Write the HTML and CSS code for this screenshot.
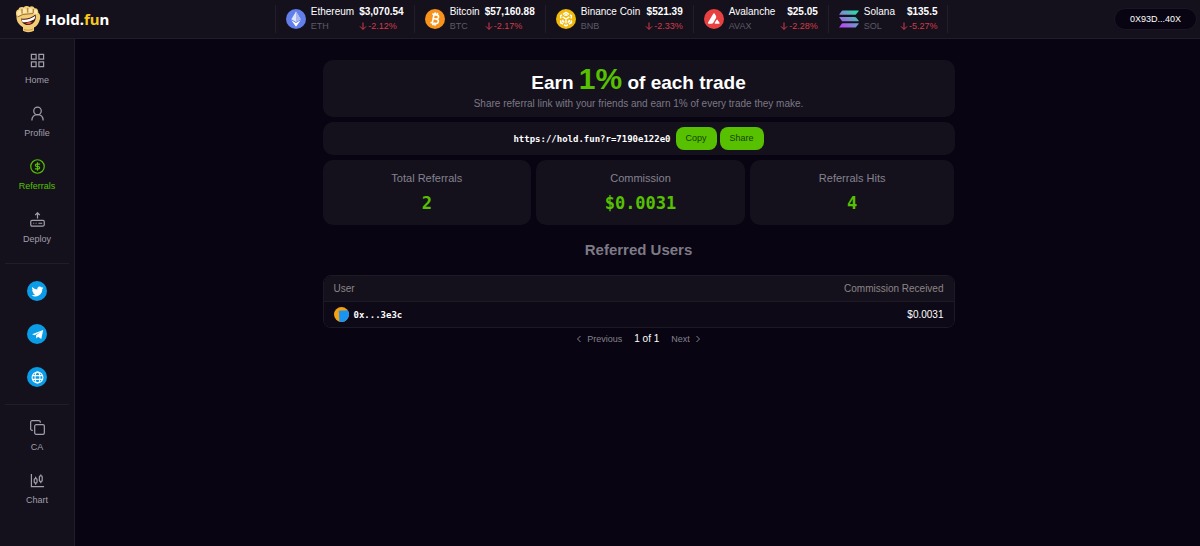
FILE: index.html
```html
<!DOCTYPE html>
<html lang="en">
<head>
<meta charset="utf-8">
<title>Hold.fun – Referrals</title>
<link rel="stylesheet" href="styles.css">
</head>
<body>
<header class="topbar">
  <a class="logo" href="#">
    <svg class="logo-mark" viewBox="0 0 26 28" aria-hidden="true">
      <path d="M1.500 11C.5 8 1 5 3.500 4.500 4 2 7 1.500 8.500 2.500 10 .5 13 .5 14.500 2c2-1.500 4.500-.8 5 1.200 2.500-.4 4 1.800 3.800 4.600C26 9.500 25.500 14 24 17c-1.200 2.800-3 4.600-5 5.500v3.300c-3 1.800-8.500 1.800-11 0v-3.600C4 20 1 16 1.500 11z" fill="#f2cd78"/>
      <path d="M3.500 5.500c2-1 3 1 3 3.500L3 11C2 9 2 6.500 3.500 5.500zM8.500 3.500c2-.6 3.300 1 3.300 4l-3.500 1C7.300 6.500 7 4.200 8.500 3.500zM14.500 3.200c2.200-.4 3 1 3 4.300h-4c-.6-1.800-.6-4 1-4.300zM20 4.500c2 0 2.500 1.800 2.300 4.500L19 8.500c-.4-1.600-.3-4 1-4z" fill="#ffe9b0"/>
      <path d="M7 4v4.500M12.800 3v4.500M18.300 4v4M2.500 12L8 9.500l10-1" fill="none" stroke="#8a5a22" stroke-width=".8"/>
      <path d="M6 13.500c4.500 1 10.500-.5 14.500-4 1.200 5-1.200 9.500-6.500 10.500-4.500.6-7.500-2.500-8-6.500z" fill="#43160f"/>
      <path d="M6.500 14.500c4.500.8 9.500-.5 13.500-3.500.2 1.600-.1 2.600-1 3.600-3.500 2-7.500 3-11.500 2.400z" fill="#fff"/>
      <path d="M10.500 18.600c1.500-1.400 4-2 6.500-1.400-1.500 2-4 2.700-6.500 1.400z" fill="#d9564b"/>
      <path d="M9 24.500c3 1 6 1 9-.5" fill="none" stroke="#c08a3a" stroke-width=".8"/>
    </svg>
    <span class="logo-text">Hold.<span class="logo-accent">fu</span>n</span>
  </a>
  <ul class="ticker">
    <li class="coin">
      <svg class="coin-icon" viewBox="0 0 32 32" aria-hidden="true"><circle cx="16" cy="16" r="16" fill="#627eea"/><path d="M16 4l-7.5 12.4L16 20.8l7.5-4.4z" fill="#dfe5fb"/><path d="M16 4v9l7.5 3.4zM16 20.8v-7.8l7.5 3.4z" fill="#a9b8f3"/><path d="M8.5 17.900L16 28.400l7.500-10.500L16 22.300z" fill="#fff"/></svg>
      <div class="coin-name"><span>Ethereum</span><span class="symbol">ETH</span></div>
      <div class="coin-price"><strong>$3,070.54</strong><span class="change"><svg viewBox="0 0 8 8"><path d="M4 .5v6.800M1 4.400l3 3 3-3"/></svg>-2.12%</span></div>
    </li>
    <li class="coin">
      <svg class="coin-icon" viewBox="0 0 32 32" aria-hidden="true"><circle cx="16" cy="16" r="16" fill="#f7931a"/><g transform="rotate(12 16 16)" fill="none" stroke="#fff" stroke-width="2.600"><path d="M10 9h7.500a3.300 3.300 0 010 6.800H13h5.500a3.500 3.500 0 010 7.200H10M13 9v14M14.500 5.500V9M18 5.500V9M14.500 23v3.500M18 23v3.500"/></g></svg>
      <div class="coin-name"><span>Bitcoin</span><span class="symbol">BTC</span></div>
      <div class="coin-price"><strong>$57,160.88</strong><span class="change"><svg viewBox="0 0 8 8"><path d="M4 .5v6.800M1 4.400l3 3 3-3"/></svg>-2.17%</span></div>
    </li>
    <li class="coin">
      <svg class="coin-icon" viewBox="0 0 32 32" aria-hidden="true"><circle cx="16" cy="16" r="16" fill="#f0b90b"/><path d="M11 8.500l5-3 5 3M7.500 15v-4.500l2-1.200M24.500 15v-4.500l-2-1.200M7.500 18v4l4 2.300M24.500 18v4l-4 2.300M13 25.200l3 1.800 3-1.800M10.500 12.500l5.500 3.200 5.500-3.200M16 15.700V23M11 17v3l2.500 1.500M21 17v3l-2.500 1.500M13.500 10.500l2.500-1.500 2.500 1.500" fill="none" stroke="#fff" stroke-width="2.400"/></svg>
      <div class="coin-name"><span>Binance Coin</span><span class="symbol">BNB</span></div>
      <div class="coin-price"><strong>$521.39</strong><span class="change"><svg viewBox="0 0 8 8"><path d="M4 .5v6.800M1 4.400l3 3 3-3"/></svg>-2.33%</span></div>
    </li>
    <li class="coin">
      <svg class="coin-icon" viewBox="0 0 32 32" aria-hidden="true"><circle cx="16" cy="16" r="16" fill="#e84142"/><path d="M14.800 7.600q1.200-2 2.400 0l2 3.600q.8 1.500 0 3l-4.600 8q-.8 1.300-2.400 1.300H7.500q-2 0-1-1.800zM19.800 17.800q1.100-1.800 2.200 0l2.800 4.200q.8 1.500-.9 1.500h-5.800q-1.700 0-.9-1.500z" fill="#fff"/></svg>
      <div class="coin-name"><span>Avalanche</span><span class="symbol">AVAX</span></div>
      <div class="coin-price"><strong>$25.05</strong><span class="change"><svg viewBox="0 0 8 8"><path d="M4 .5v6.800M1 4.400l3 3 3-3"/></svg>-2.28%</span></div>
    </li>
    <li class="coin">
      <svg class="coin-icon" viewBox="0 0 32 32" aria-hidden="true"><defs><linearGradient id="sol" gradientUnits="userSpaceOnUse" x1="4" y1="30" x2="28" y2="3"><stop offset="0" stop-color="#b743f5"/><stop offset=".5" stop-color="#7b8fd0"/><stop offset="1" stop-color="#25dfa5"/></linearGradient></defs><path d="M6 2.500h25q1 0 .3 1l-4 5q-.8.800-1.800.800H1q-1.300 0-.4-1l3.800-5Q5 2.500 6 2.500zM1 12.700h24.500q1 0 1.800.800l4 5q.7 1-.3 1H6q-1 0-1.600-.8l-3.800-5Q-.2 12.700 1 12.700zM6 22.900h25q1 0 .3 1l-4 5q-.8.800-1.800.800H1q-1.300 0-.4-1l3.800-5q.6-.8 1.600-.8z" fill="url(#sol)"/></svg>
      <div class="coin-name"><span>Solana</span><span class="symbol">SOL</span></div>
      <div class="coin-price"><strong>$135.5</strong><span class="change"><svg viewBox="0 0 8 8"><path d="M4 .5v6.800M1 4.400l3 3 3-3"/></svg>-5.27%</span></div>
    </li>
  </ul>
  <button class="wallet" type="button">0X93D...40X</button>
</header>
<div class="layout">
  <nav class="sidebar">
    <div class="nav-group">
      <a class="nav-item" href="#"><svg viewBox="0 0 16 16"><path d="M1.500 1.500h5v5h-5zM9.500 1.500h5v5h-5zM1.500 9.500h5v5h-5zM9.500 9.500h5v5h-5z"/></svg>Home</a>
      <a class="nav-item" href="#"><svg viewBox="0 0 16 16"><circle cx="8" cy="5.200" r="4"/><path d="M2 15.500c0-4 2.300-6.300 6-6.300s6 2.300 6 6.300"/></svg>Profile</a>
      <a class="nav-item active" href="#"><svg viewBox="0 0 16 16"><circle cx="8" cy="8" r="7.200"/><path d="M10.800 5.500H7a1.250 1.250 0 000 2.500h2a1.250 1.250 0 010 2.500H5.200M8 3.500v9"/></svg>Referrals</a>
      <a class="nav-item" href="#"><svg viewBox="0 0 16 16"><rect x=".8" y="9" width="14.400" height="6" rx="1.300"/><path d="M8 7V1M5.500 3.300L8 .8l2.500 2.500M3.500 12h1M6 12h1M9 12h4"/></svg>Deploy</a>
    </div>
    <div class="social-group">
      <a class="social" href="#" aria-label="Twitter"><svg viewBox="0 0 24 24"><path d="M23 5c-.8.400-1.700.6-2.600.7.900-.5 1.600-1.400 2-2.400-.9.500-1.900.9-2.900 1.100A4.500 4.500 0 0011.700 8.500C8 8.300 4.700 6.500 2.500 3.800c-1.200 2-.6 4.700 1.400 6-.7 0-1.400-.2-2-.6 0 2.200 1.500 4.100 3.600 4.600-.6.200-1.300.2-2 .1.600 1.800 2.200 3.100 4.200 3.100A9.100 9.100 0 011 18.900 12.900 12.900 0 0020.800 7.400C21.700 6.700 22.400 5.900 23 5z"/></svg></a>
      <a class="social" href="#" aria-label="Telegram"><svg viewBox="0 0 24 24"><path d="M2 11.500L22.500 3.500 19 20.500l-6-4.300-3 3-.8-5.700L18 7 6.500 13.500z"/></svg></a>
      <a class="social" href="#" aria-label="Website"><svg class="globe" viewBox="0 0 24 24"><circle cx="12" cy="12" r="10"/><ellipse cx="12" cy="12" rx="4.500" ry="10"/><path d="M3 8.500h18M3 15.500h18"/></svg></a>
    </div>
    <div class="nav-group">
      <a class="nav-item" href="#"><svg viewBox="0 0 16 16"><rect x="5" y="5" width="10.300" height="10.300" rx="1.500"/><path d="M3 11H2.200A1.500 1.500 0 01.7 9.500V2.200A1.500 1.500 0 012.200.7h7.300A1.500 1.500 0 0111 2.200V3"/></svg>CA</a>
      <a class="nav-item" href="#"><svg viewBox="0 0 16 16"><path d="M1.500 1v13.500H15M6 4v2M6 10.500v2M11.500 1.500V3M11.500 9v2"/><rect x="4.500" y="6" width="3" height="4.500" rx="1"/><rect x="10" y="3" width="3" height="6" rx="1"/></svg>Chart</a>
    </div>
  </nav>
  <main class="main">
    <div class="content">
      <section class="panel hero">
        <h1>Earn <span class="hero-rate">1%</span> of each trade</h1>
        <p>Share referral link with your friends and earn 1% of every trade they make.</p>
      </section>
      <section class="panel link-row">
        <code>https://hold.fun?r=7190e122e0</code>
        <div class="link-actions">
          <button class="btn" type="button">Copy</button>
          <button class="btn" type="button">Share</button>
        </div>
      </section>
      <dl class="stats">
        <div class="panel stat"><dt>Total Referrals</dt><dd>2</dd></div>
        <div class="panel stat"><dt>Commission</dt><dd>$0.0031</dd></div>
        <div class="panel stat"><dt>Referrals Hits</dt><dd>4</dd></div>
      </dl>
      <h2>Referred Users</h2>
      <div class="table-wrap">
        <table>
          <thead><tr><th scope="col">User</th><th scope="col">Commission Received</th></tr></thead>
          <tbody><tr>
            <td><div class="user"><svg class="avatar" viewBox="0 0 14 14" aria-hidden="true"><defs><clipPath id="av"><circle cx="7" cy="7" r="7"/></clipPath></defs><g clip-path="url(#av)"><path d="M0 0h14v14H0z" fill="#f5a011"/><path d="M4.500 3.500L14 3v11H5z" fill="#1a94f2"/></g></svg><code>0x...3e3c</code></div></td>
            <td>$0.0031</td>
          </tr></tbody>
        </table>
      </div>
      <div class="pager">
        <button type="button"><svg viewBox="0 0 8 8"><path d="M5.500 1l-3 3 3 3"/></svg>Previous</button>
        <span>1 of 1</span>
        <button type="button">Next<svg viewBox="0 0 8 8"><path d="M2.500 1l3 3-3 3"/></svg></button>
      </div>
    </div>
  </main>
</div>
</body>
</html>
```
FILE: styles.css
```css
* { box-sizing: border-box; }

body {
  margin: 0;
  min-height: 100vh;
  display: flex;
  flex-direction: column;
  background: #080411;
  color: #fff;
  font: 10px/14px "Liberation Sans", Arial, sans-serif;
}

a { color: inherit; text-decoration: none; }
button { font: inherit; color: inherit; border: 0; background: none; padding: 0; cursor: pointer; }
h1, h2, p, ul, dl, dd { margin: 0; padding: 0; }
code { font: bold 9px/14px "DejaVu Sans Mono", monospace; }

.topbar {
  display: flex;
  align-items: center;
  justify-content: space-between;
  height: 39px;
  padding: 0 3px 0 15px;
  background: #14111d;
  border-bottom: 1px solid #211e2a;
}

.logo { display: flex; align-items: center; gap: 4px; }
.logo-mark { width: 26px; height: 28px; }
.logo-text { font: bold 15px/20px "Noto Sans", sans-serif; }
.logo-accent { color: #f9c81b; }

.ticker { display: flex; list-style: none; border-left: 1px solid #211e2a; }
.coin {
  display: flex;
  align-items: center;
  gap: 5px;
  padding: 0 10px;
  border-right: 1px solid #211e2a;
}
.coin-icon { width: 20px; height: 20px; }
.coin-name, .coin-price { display: flex; flex-direction: column; }
.coin-price strong { text-align: right; }
.symbol { font-size: 9px; color: #5d5a66; }
.change { display: flex; align-items: center; gap: 1px; font-size: 9px; color: #d23c47; }
.change svg { width: 8px; height: 8px; fill: none; stroke: currentColor; stroke-width: 1; }

.wallet {
  padding: 0 15px;
  border: 1px solid #1a1624;
  border-radius: 11px;
  background: #080411;
  font-size: 9px;
  line-height: 20px;
}

.layout { display: flex; flex: 1; }

.sidebar {
  flex: none;
  width: 75px;
  padding: 9px 5px;
  background: #14111d;
  border-right: 1px solid #211e2a;
}
.nav-group { display: flex; flex-direction: column; }
.nav-item {
  display: flex;
  flex-direction: column;
  align-items: center;
  gap: 5px;
  height: 53px;
  padding-top: 5px;
  color: #a19fa9;
  font-size: 9px;
}
.nav-item svg { width: 15px; height: 15px; fill: none; stroke: currentColor; stroke-width: 1.3; }
.nav-item.active { color: #57c000; }

.social-group {
  display: flex;
  flex-direction: column;
  align-items: center;
  gap: 23px;
  margin: 3px 0 10px;
  padding: 17px 0;
  border: solid #211e2a;
  border-width: 1px 0;
}
.social {
  display: flex;
  align-items: center;
  justify-content: center;
  width: 20px;
  height: 20px;
  border-radius: 50%;
  background: #0b9ce8;
}
.social svg { width: 13px; height: 13px; fill: #fff; }
.social .globe { fill: none; stroke: #fff; stroke-width: 2; }

.main { flex: 1; padding: 21px 20px 20px 22px; }
.content { max-width: 632px; margin: 0 auto; }
.panel { background: #14111d; border-radius: 10px; }

.hero { padding: 2px 10px 6px; text-align: center; }
.hero h1 { font-size: 19px; line-height: 22px; }
.hero-rate { font-size: 30px; line-height: 34px; color: #57c000; }
.hero p { padding-top: 1px; color: #7b7884; }

.link-row {
  display: flex;
  justify-content: center;
  align-items: center;
  gap: 5px;
  margin: 5px 0;
  padding: 5px;
}
.link-actions { display: flex; gap: 3px; }
.btn {
  padding: 0 10px;
  border-radius: 8px;
  background: #57c000;
  color: #164000;
  font-size: 9px;
  line-height: 23px;
}

.stats { display: grid; grid-template-columns: 208fr 208fr 204fr; gap: 5px; text-align: center; }
.stat { padding: 11px 10px 12px; }
.stat dt { font-size: 11px; color: #85828e; }
.stat dd { padding-top: 8px; font: bold 17px/20px "DejaVu Sans Mono", monospace; color: #57c000; }

h2 { padding: 15px 0; text-align: center; font-size: 15px; line-height: 20px; color: #7d7a86; }

.table-wrap { overflow: hidden; border: 1px solid #1d1a26; border-radius: 8px; }
table { width: 100%; border-collapse: collapse; background: #0d0916; }
thead { background: #14111d; color: #8c8585; }
th, td { padding: 5px 10px; font-weight: 400; line-height: 15px; text-align: left; }
th:last-child, td:last-child { text-align: right; }
tbody tr { border-top: 1px solid #1d1a26; }
.user { display: flex; align-items: center; gap: 5px; }
.avatar { width: 15px; height: 15px; }

.pager { display: flex; align-items: center; justify-content: center; gap: 12px; padding-top: 4px; }
.pager button { display: flex; align-items: center; gap: 4px; font-size: 9px; color: #85828e; }
.pager svg { width: 8px; height: 8px; fill: none; stroke: currentColor; }
```
